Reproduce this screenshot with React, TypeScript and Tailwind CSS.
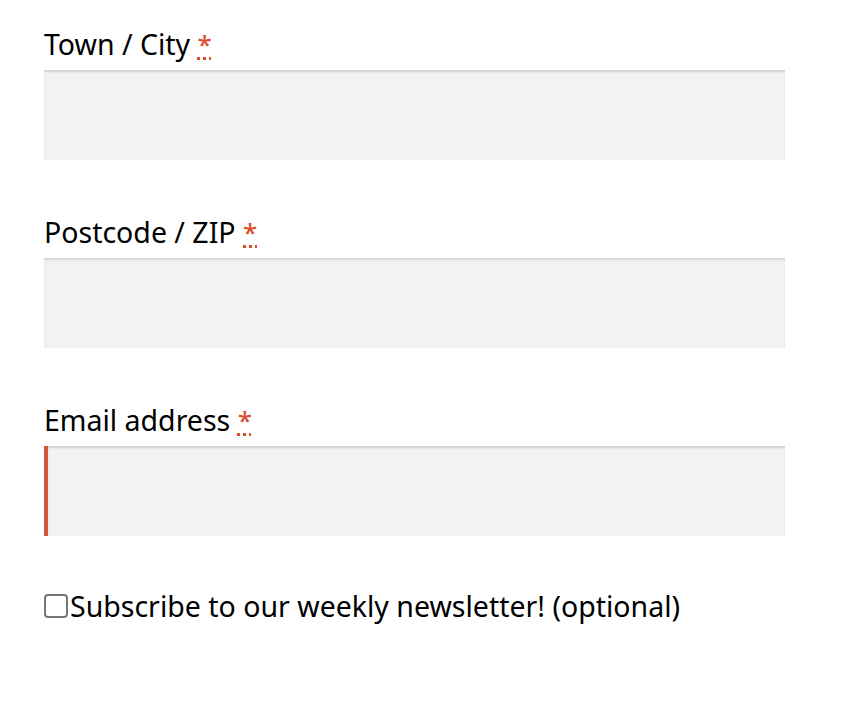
export default function App() {
  const fields = [
    { label: 'Town / City', invalid: false },
    { label: 'Postcode / ZIP', invalid: false },
    { label: 'Email address', invalid: true },
  ]

  return (
    <div className="min-h-[712px] bg-white pl-[44px] pt-[22px] font-['Noto_Sans','Liberation_Sans',sans-serif] text-[28.5px] text-black">
      <div className="w-[741px]">
        {fields.map(f => (
          <p key={f.label} className="mb-[50px]">
            <label className="block h-[40px] leading-[44px] mb-[8px]">
              {f.label}{' '}
              <abbr
                title="required"
                className="text-[26px] align-[1px] text-[#d9512c] font-medium underline decoration-dotted decoration-[3px] underline-offset-[3px]"
              >
                *
              </abbr>
            </label>
            <input
              type="text"
              className={
                'block w-full h-[90px] bg-[#f2f2f2] shadow-[inset_0_2px_2px_rgba(0,0,0,0.125)] outline-none ' +
                (f.invalid ? 'border-l-4 border-[#d6543a]' : '')
              }
            />
          </p>
        ))}

        <label className="flex items-center leading-[40px]">
          <span className="w-[24px] h-[24px] mr-[2px] rounded-[4px] border-2 border-[#767676] bg-white shrink-0" />
          Subscribe to our weekly newsletter! (optional)
        </label>
      </div>
    </div>
  )
}
